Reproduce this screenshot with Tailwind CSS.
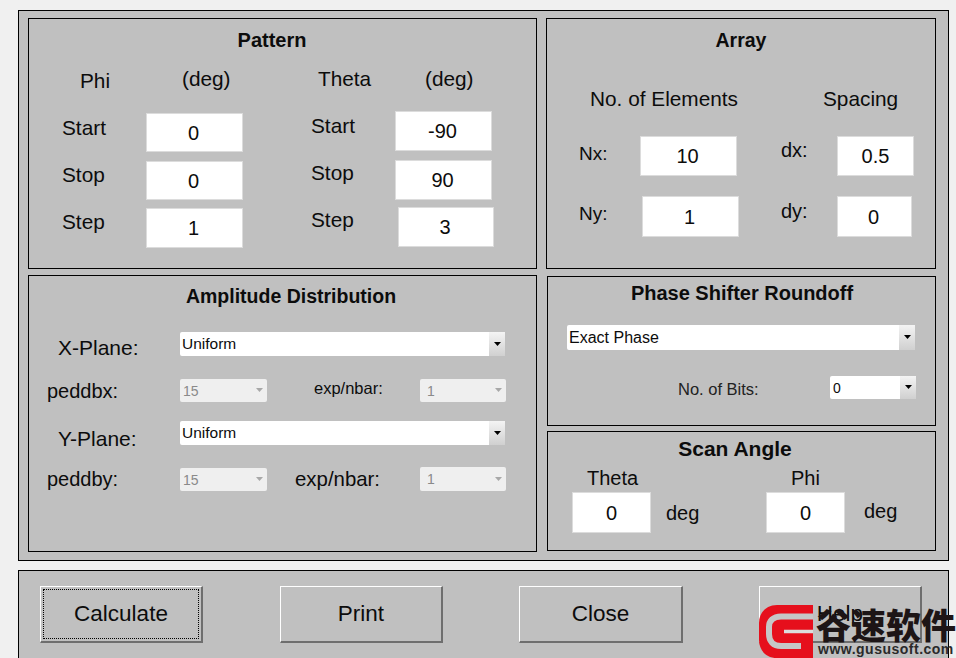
<!doctype html>
<html><head><meta charset="utf-8"><script src="https://cdn.jsdelivr.net/npm/@tailwindcss/browser@4"></script></head>
<body class="m-0 w-[956px] h-[658px] overflow-hidden bg-[#f0f0f0] font-['Liberation_Sans',Arial,sans-serif] text-[20px] leading-[24px] text-[#0c0c0c]">
<div class="relative w-[956px] h-[658px] overflow-hidden pt-[10px] pl-[18px]">

<!-- main frame -->
<div class="box-border w-[931px] h-[551px] border border-black bg-[#c0c0c0] pt-[7px] pl-[9px] flex gap-[9px]">
  <!-- left column -->
  <div class="w-[509px] flex flex-col gap-[6px]">
    <!-- Pattern -->
    <section class="box-border w-[509px] h-[251px] border border-black">
      <h2 class="h-[42px] pr-[21px] flex items-center justify-center font-bold">Pattern</h2>
      <div class="flex text-[20.800px]">
        <div class="w-[250px]">
          <div class="h-[52px] flex">
            <span class="w-[153px] pl-[51px] mt-[8px]">Phi</span><span class="mt-[6px]">(deg)</span>
          </div>
          <div class="flex"><span class="w-[117px] pl-[33px] mt-[3px]">Start</span><div class="box-border w-[97px] h-[39px] pr-[2px] bg-white border border-[#dcdcdc] text-[20px] flex items-center justify-center">0</div></div>
          <div class="flex mt-[9px]"><span class="w-[117px] pl-[33px] mt-[2px]">Stop</span><div class="box-border w-[97px] h-[39px] pr-[2px] bg-white border border-[#dcdcdc] text-[20px] flex items-center justify-center">0</div></div>
          <div class="flex mt-[8px]"><span class="w-[117px] pl-[33px] mt-[2px]">Step</span><div class="box-border w-[97px] h-[40px] pr-[2px] bg-white border border-[#dcdcdc] text-[20px] flex items-center justify-center">1</div></div>
        </div>
        <div>
          <div class="h-[50px] flex">
            <span class="w-[146px] pl-[39px] mt-[6px]">Theta</span><span class="mt-[6px]">(deg)</span>
          </div>
          <div class="flex"><span class="w-[116px] pl-[32px] mt-[3px]">Start</span><div class="box-border w-[97px] h-[40px] pr-[2px] bg-white border border-[#dcdcdc] text-[20px] flex items-center justify-center">-90</div></div>
          <div class="flex mt-[9px]"><span class="w-[116px] pl-[32px] mt-[1px]">Stop</span><div class="box-border w-[97px] h-[40px] pr-[2px] bg-white border border-[#dcdcdc] text-[20px] flex items-center justify-center">90</div></div>
          <div class="flex mt-[7px]"><span class="w-[119px] pl-[32px] mt-[1px]">Step</span><div class="box-border w-[96px] h-[40px] pr-[2px] bg-white border border-[#dcdcdc] text-[20px] flex items-center justify-center">3</div></div>
        </div>
      </div>
    </section>
    <!-- Amplitude -->
    <section class="box-border w-[509px] h-[277px] border border-black">
      <h2 class="h-[40px] pl-[17px] flex items-center justify-center font-bold text-[19.500px]">Amplitude Distribution</h2>
      <div class="pt-[16px]">
        <div class="flex h-[24px]"><span class="w-[151px] pl-[29px] text-[21px] mt-[4px]">X-Plane:</span>
          <div class="w-[325px] h-[24px] rounded-[2px] bg-white flex items-center justify-between text-[15.500px] pl-[2px]"><span>Uniform</span><div class="w-[16px] h-[24px] bg-gradient-to-b from-[#f4f4f4] to-[#d0d0d0] flex items-center justify-center"><svg width="9" height="5" viewBox="0 0 9 5"><path d="M1 0h7L4.500 4z" fill="#000"/></svg></div></div>
        </div>
        <div class="flex mt-[23px] h-[23px]"><span class="w-[151px] pl-[18px]">peddbx:</span>
          <div class="w-[87px] h-[23px] rounded-[2px] bg-[#efefef] flex items-center justify-between text-[14px] text-[#8a8a8a] pl-[3px]"><span>15</span><svg class="mr-[3px]" width="9" height="5" viewBox="0 0 9 5"><path d="M1 0h7L4.500 4z" fill="#a8a8a8"/></svg></div>
          <span class="w-[153px] pl-[47px] text-[16.500px] -mt-[3px]">exp/nbar:</span>
          <div class="w-[86px] h-[23px] rounded-[2px] bg-[#efefef] flex items-center justify-between text-[14px] text-[#8a8a8a] pl-[7px]"><span>1</span><svg class="mr-[3px]" width="9" height="5" viewBox="0 0 9 5"><path d="M1 0h7L4.500 4z" fill="#a8a8a8"/></svg></div>
        </div>
        <div class="flex h-[24px] mt-[19px]"><span class="w-[151px] pl-[29px] text-[21px] mt-[6px]">Y-Plane:</span>
          <div class="w-[325px] h-[24px] rounded-[2px] bg-white flex items-center justify-between text-[15.500px] pl-[2px]"><span>Uniform</span><div class="w-[16px] h-[24px] bg-gradient-to-b from-[#f4f4f4] to-[#d0d0d0] flex items-center justify-center"><svg width="9" height="5" viewBox="0 0 9 5"><path d="M1 0h7L4.500 4z" fill="#000"/></svg></div></div>
        </div>
        <div class="flex mt-[23px] h-[23px]"><span class="w-[151px] pl-[18px] -mt-[1px]">peddby:</span>
          <div class="w-[87px] h-[23px] rounded-[2px] bg-[#efefef] flex items-center justify-between text-[14px] text-[#8a8a8a] pl-[3px]"><span>15</span><svg class="mr-[3px]" width="9" height="5" viewBox="0 0 9 5"><path d="M1 0h7L4.500 4z" fill="#a8a8a8"/></svg></div>
          <span class="w-[153px] pl-[28px] text-[20.400px] -mt-[1px]">exp/nbar:</span>
          <div class="w-[86px] h-[24px] -mt-[1px] rounded-[2px] bg-[#efefef] flex items-center justify-between text-[14px] text-[#8a8a8a] pl-[7px]"><span>1</span><svg class="mr-[3px]" width="9" height="5" viewBox="0 0 9 5"><path d="M1 0h7L4.500 4z" fill="#a8a8a8"/></svg></div>
        </div>
      </div>
    </section>
  </div>
  <!-- right column -->
  <div class="w-[390px] flex flex-col">
    <!-- Array -->
    <section class="box-border w-[390px] h-[251px] border border-black">
      <h2 class="h-[42px] flex items-center justify-center font-bold text-[19.500px]">Array</h2>
      <div class="flex mt-[26px] text-[20.800px]"><span class="w-[276px] pl-[43px]">No. of Elements</span><span>Spacing</span></div>
      <div class="flex mt-[25px]">
        <span class="w-[93px] pl-[32px] mt-[6px] text-[19px]">Nx:</span>
        <div class="box-border w-[97px] h-[40px] pr-[2px] bg-white border border-[#dcdcdc] flex items-center justify-center">10</div>
        <span class="w-[100px] pl-[44px] mt-[2px]">dx:</span>
        <div class="box-border w-[77px] h-[40px] bg-white border border-[#dcdcdc] flex items-center justify-center">0.5</div>
      </div>
      <div class="flex mt-[20px]">
        <span class="w-[95px] pl-[32px] mt-[6px] text-[19px]">Ny:</span>
        <div class="box-border w-[97px] h-[41px] pr-[2px] bg-white border border-[#dcdcdc] flex items-center justify-center">1</div>
        <span class="w-[98px] pl-[42px] mt-[3px]">dy:</span>
        <div class="box-border w-[75px] h-[41px] pr-[2px] bg-white border border-[#dcdcdc] flex items-center justify-center">0</div>
      </div>
    </section>
    <!-- Phase -->
    <section class="box-border w-[389px] h-[150px] ml-[1px] mt-[7px] border border-black">
      <h2 class="h-[32px] pl-[1px] flex items-center justify-center font-bold">Phase Shifter Roundoff</h2>
      <div class="ml-[19px] mt-[16px] w-[348px] h-[25px] rounded-[2px] bg-white flex items-center justify-between text-[16px] pl-[2px]"><span>Exact Phase</span><div class="w-[16px] h-[25px] bg-gradient-to-b from-[#f4f4f4] to-[#d0d0d0] flex items-center justify-center"><svg width="9" height="5" viewBox="0 0 9 5"><path d="M1 0h7L4.500 4z" fill="#000"/></svg></div></div>
      <div class="flex mt-[26px]">
        <span class="w-[282px] pl-[130px] text-[16.500px] text-[#222] mt-[1px]">No. of Bits:</span>
        <div class="w-[86px] h-[23px] rounded-[2px] bg-white flex items-center justify-between text-[14px] pl-[3px]"><span>0</span><div class="w-[16px] h-[23px] bg-gradient-to-b from-[#f4f4f4] to-[#d0d0d0] flex items-center justify-center"><svg width="9" height="5" viewBox="0 0 9 5"><path d="M1 0h7L4.500 4z" fill="#000"/></svg></div></div>
      </div>
    </section>
    <!-- Scan -->
    <section class="box-border w-[389px] h-[120px] ml-[1px] mt-[5px] border border-black">
      <h2 class="h-[34px] pr-[13px] flex items-center justify-center font-bold text-[21px]">Scan Angle</h2>
      <div class="flex"><span class="w-[243px] pl-[39px]">Theta</span><span>Phi</span></div>
      <div class="flex mt-[2px]">
        <div class="box-border ml-[24px] w-[79px] h-[41px] bg-white border border-[#dcdcdc] flex items-center justify-center">0</div>
        <span class="w-[115px] pl-[15px] mt-[9px]">deg</span>
        <div class="box-border w-[79px] h-[41px] bg-white border border-[#dcdcdc] flex items-center justify-center">0</div>
        <span class="pl-[19px] mt-[7px]">deg</span>
      </div>
    </section>
  </div>
</div>

<!-- button frame -->
<div class="box-border w-[931px] h-[100px] mt-[9px] border border-black bg-[#c0c0c0] pt-[15px] pl-[21px] flex gap-[77px] text-[22.500px]">
  <button class="box-border w-[163px] h-[57px] p-[2px] border border-t-white border-l-white border-r-[#6e6e6e] border-b-[#6e6e6e] border-b-2 border-r-2"><span class="box-border w-full h-full flex items-center justify-center border border-dotted border-black">Calculate</span></button>
  <button class="box-border w-[163px] h-[57px] flex items-center justify-center border border-t-white border-l-white border-r-[#6e6e6e] border-b-[#6e6e6e] border-b-2 border-r-2">Print</button>
  <button class="box-border w-[164px] h-[57px] -ml-[1px] flex items-center justify-center border border-t-white border-l-white border-r-[#6e6e6e] border-b-[#6e6e6e] border-b-2 border-r-2">Close</button>
  <button class="box-border w-[163px] h-[57px] -ml-[1px] flex items-center justify-center border border-t-white border-l-white border-r-[#6e6e6e] border-b-[#6e6e6e] border-b-2 border-r-2">Help</button>
</div>

<!-- watermark overlay -->
<div class="absolute left-[759px] top-[603px] w-[197px] h-[55px]">
  <svg class="absolute left-0 top-0" width="54" height="55" viewBox="0 0 54 55">
    <path d="M54 2H18C7 2 0 10 0 20V37C0 47 7 55 18 55H54Z" fill="#e60f1c"/>
    <path d="M54 13.500H22C14 13.500 10 18 10 24V31C10 38 14 43 22 43H42" fill="none" stroke="#c6c6c6" stroke-width="6"/>
    <path d="M54 28.500H25" fill="none" stroke="#dcdcdc" stroke-width="3.500"/>
  </svg>
  <div class="absolute left-[57px] top-[1px] whitespace-nowrap font-['Noto_Sans_CJK_SC',sans-serif] font-black text-[35px] leading-[40px] text-[#1d1516]">谷速软件</div>
  <div class="absolute left-[59px] top-[38px] whitespace-nowrap font-bold text-[14px] leading-[16px] tracking-[0.500px] text-[#2a2a2a]">www.gususoft.com</div>
</div>
</div>
</body></html>
